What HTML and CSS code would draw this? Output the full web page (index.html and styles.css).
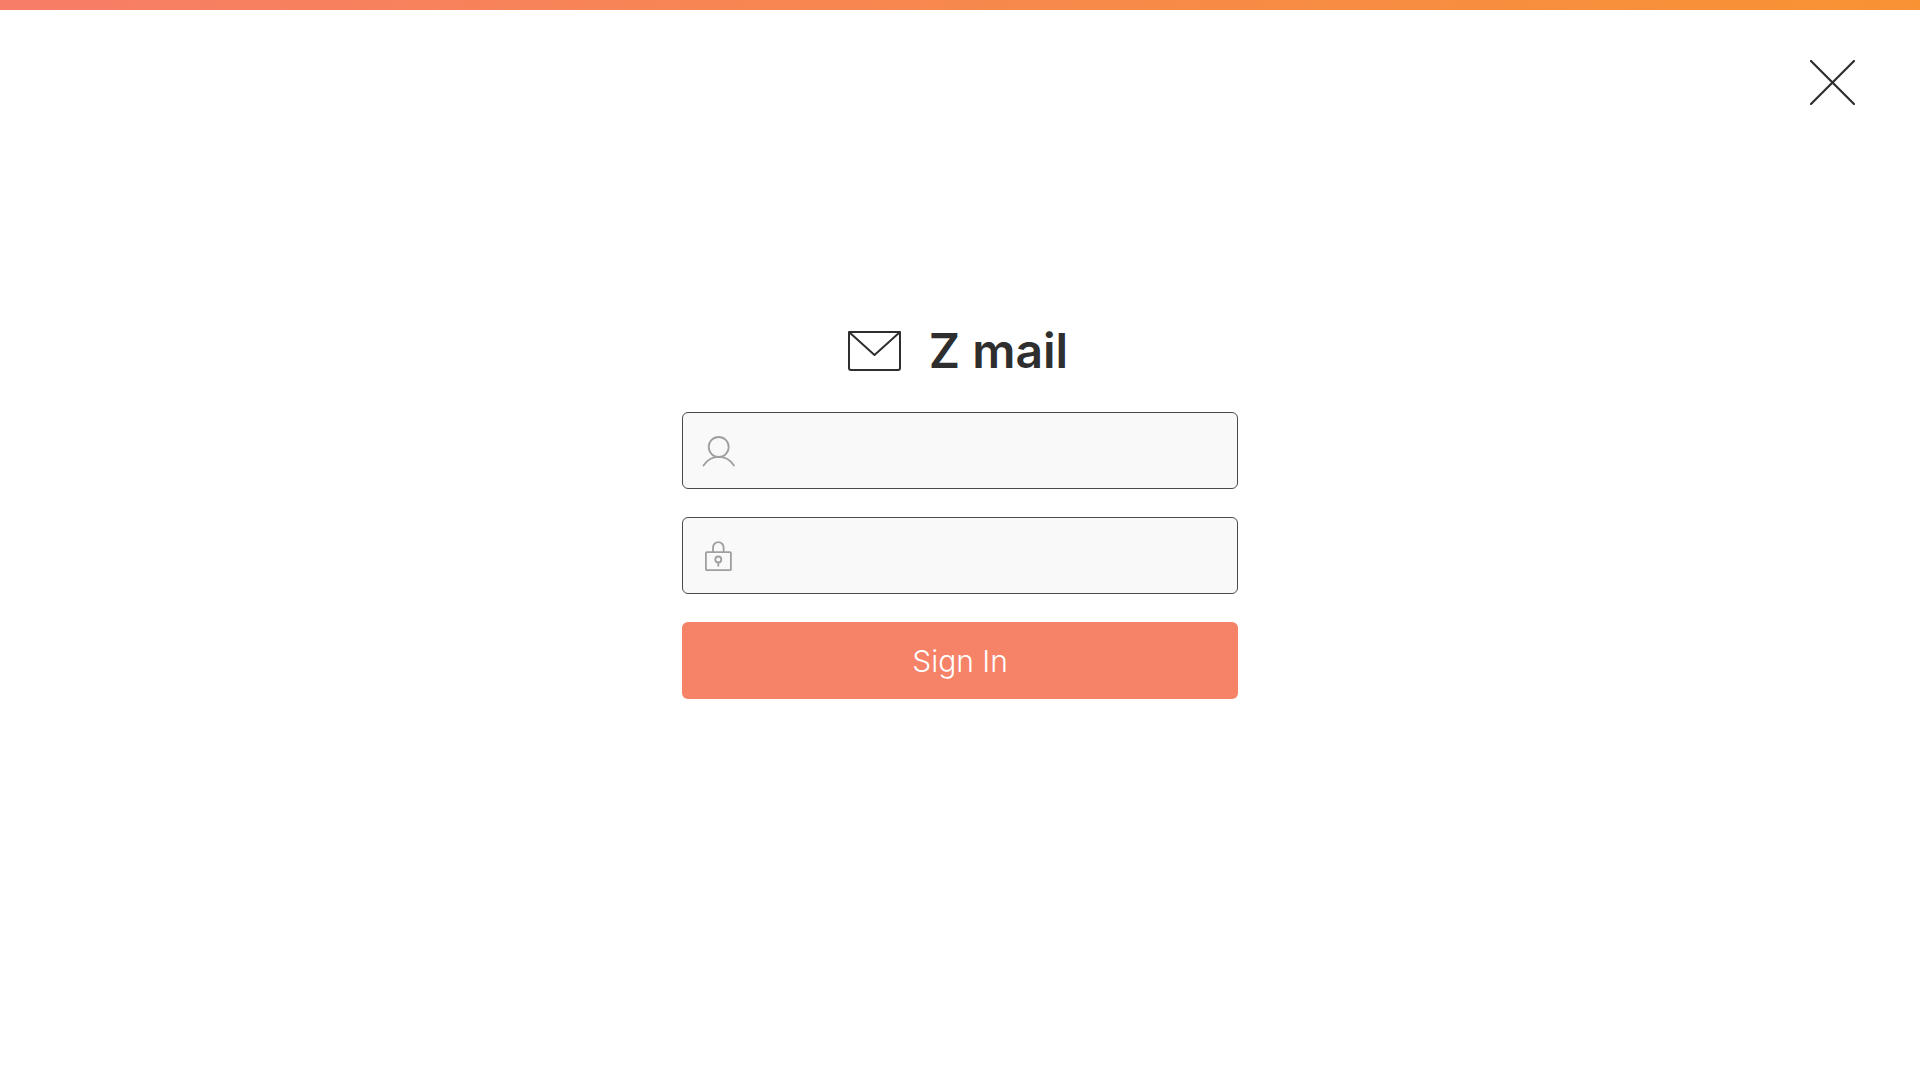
FILE: index.html
```html
<!DOCTYPE html>
<html lang="en">
<head>
  <meta charset="utf-8">
  <meta name="viewport" content="width=device-width, initial-scale=1">
  <title>Z mail</title>
  <link rel="stylesheet" href="styles.css">
</head>
<body>
  <div class="accent-bar"></div>
  <header class="top">
    <button class="close" type="button" aria-label="Close">
      <svg viewBox="0 0 45 45" width="45" height="45" fill="none" stroke="currentColor" stroke-width="2.200" stroke-linecap="round"><path d="M1 1 44 44M44 1 1 44"/></svg>
    </button>
  </header>
  <main class="content">
    <div class="brand">
      <svg class="brand-icon" viewBox="0 0 53 40" width="53" height="40" fill="none" stroke="currentColor" stroke-width="2"><path d="M1 1H52V37Q52 39 50 39H3Q1 39 1 37ZL26.5 24 52 1" stroke-linejoin="round"/></svg>
      <h1 class="brand-name">Z mail</h1>
    </div>
    <form class="login">
      <label class="field">
        <svg class="field-icon" viewBox="0 0 34 34" width="34" height="34" fill="none" stroke="currentColor" stroke-width="1.800"><circle cx="16.700" cy="13" r="10"/><path d="M1.500 31.500C9 20 24.500 20 32 31.500" stroke-linecap="round"/></svg>
        <input class="field-input" type="text" name="user" aria-label="User name" autocomplete="username">
      </label>
      <label class="field">
        <svg class="field-icon" viewBox="0 0 34 34" width="34" height="34" fill="none" stroke="currentColor" stroke-width="1.800"><rect x="3.900" y="13.200" width="25" height="18" rx="1"/><path d="M11 13V8.500a5.300 5.300 0 0 1 10.600 0V13"/><circle cx="16.300" cy="20.500" r="3"/><path d="M16.300 23.500v4"/></svg>
        <input class="field-input" type="password" name="password" aria-label="Password" autocomplete="current-password">
      </label>
      <button class="submit" type="submit">Sign In</button>
    </form>
  </main>
</body>
</html>
```
FILE: styles.css
```css
* {
  box-sizing: border-box;
}

body {
  margin: 0;
  background: #fff;
  color: #2e2e2f;
  font-family: Inter, "Liberation Sans", sans-serif;
}

.accent-bar {
  height: 10px;
  background: linear-gradient(90deg, #f77d67, #f79333);
}

.top {
  display: flex;
  justify-content: flex-end;
  padding: 50px 65px 0;
}

.close {
  padding: 0;
  border: 0;
  background: none;
  color: inherit;
  cursor: pointer;
}

.close svg,
.brand-icon,
.field-icon {
  display: block;
  flex: none;
}

.content {
  max-width: 588px;
  margin: 0 auto;
  padding: 216px 16px 32px;
}

.brand {
  display: flex;
  align-items: center;
  justify-content: center;
  gap: 28px;
  margin-bottom: 31px;
  padding-right: 4px;
}

.brand-name {
  margin: 0;
  font-size: 48px;
  font-weight: 600;
  line-height: 60px;
}

.login {
  display: flex;
  flex-direction: column;
  gap: 28px;
}

.field {
  display: flex;
  align-items: center;
  gap: 16px;
  height: 77px;
  padding: 0 19px;
  border: 1px solid #4a4a4a;
  border-radius: 6px;
  background: #f9f9f9;
  color: #9f9f9f;
}

.field-input {
  flex: 1;
  min-width: 0;
  height: 100%;
  padding: 0;
  border: 0;
  outline: 0;
  background: transparent;
  color: #2e2e2f;
  font: 300 24px Inter, "Liberation Sans", sans-serif;
}

.submit {
  height: 77px;
  padding: 0;
  border: 0;
  border-radius: 6px;
  background: #f68268;
  color: #fff;
  font: 300 30px Inter, "Liberation Sans", sans-serif;
  cursor: pointer;
}
```
